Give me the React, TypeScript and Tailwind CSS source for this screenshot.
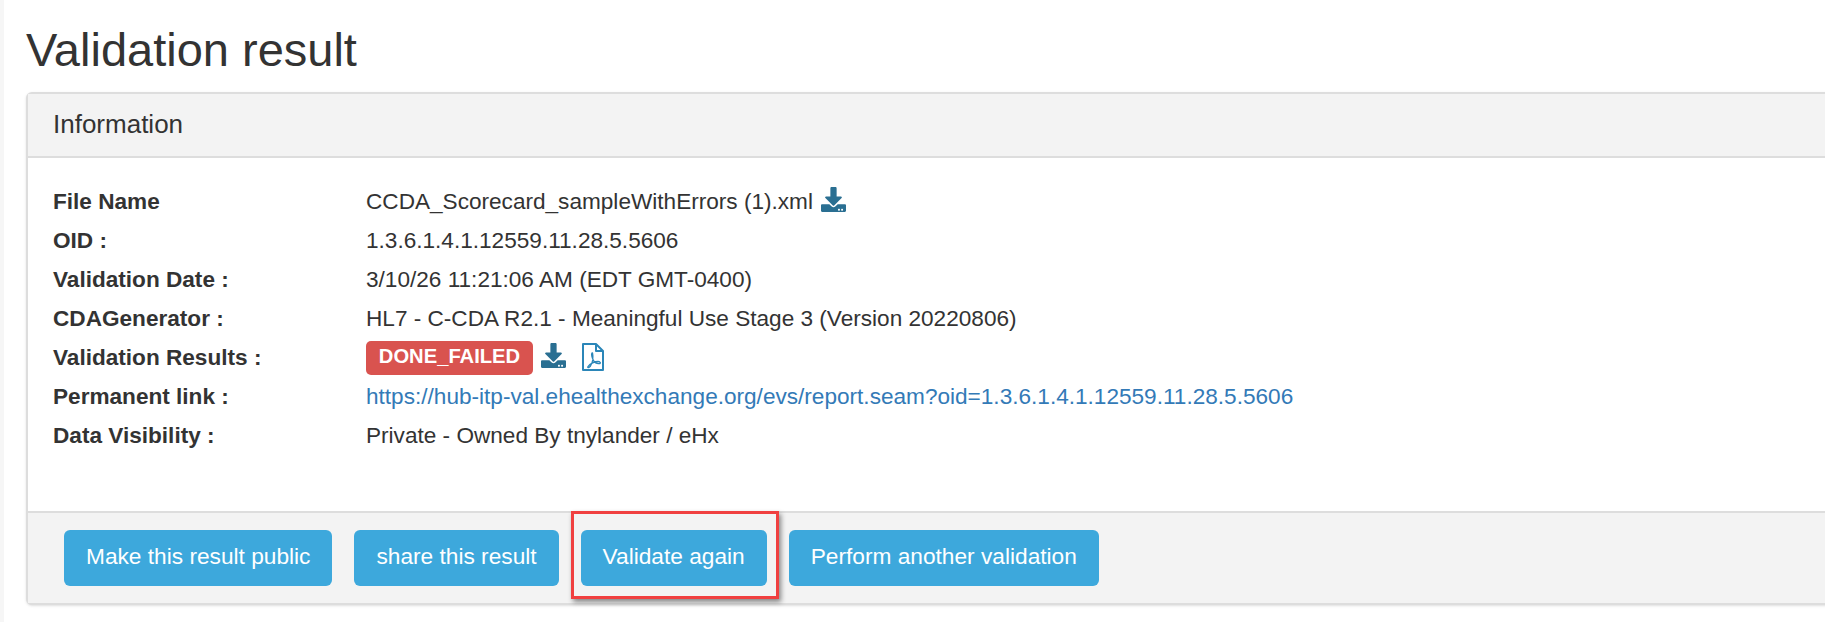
import React from 'react';
import { FaDownload } from 'react-icons/fa';

const PdfIcon: React.FC = () => (
    <svg className="ml-[16px] -mt-[1px]" width="22" height="28" viewBox="0 0 22 28" fill="none" stroke="#2b86b8">
        <path strokeWidth="2" strokeLinejoin="round" d="M1 1h13l7 7v19H1z" />
        <path strokeWidth="2" strokeLinejoin="round" d="M14 1v7h7" />
        <path strokeWidth="1.3" strokeLinejoin="round" d="M10 10c-1 1 0 5 1.5 7.5S16 21 18 20.5c1-.5 0-2-2-2-3 0-8 2-10 5-1 1.5 1 1.5 2.500-.5 1.500-2.500 3-8 2-13z" />
    </svg>
);

const rows: { label: string; value: React.ReactNode }[] = [
    {
        label: 'File Name',
        value: (
            <span className="flex items-center gap-2">
                CCDA_Scorecard_sampleWithErrors (1).xml
                <FaDownload className="text-[25px] text-[#2a6f92] -mt-1" />
            </span>
        ),
    },
    { label: 'OID :', value: '1.3.6.1.4.1.12559.11.28.5.5606' },
    { label: 'Validation Date :', value: '3/10/26 11:21:06 AM (EDT GMT-0400)' },
    { label: 'CDAGenerator :', value: 'HL7 - C-CDA R2.1 - Meaningful Use Stage 3 (Version 20220806)' },
    {
        label: 'Validation Results :',
        value: (
            <span className="flex items-center">
                <span className="bg-[#d9534f] text-white font-bold text-[20.2px] leading-none rounded-[5px] h-[34px] w-[167px] flex items-center justify-center pb-[2px]">
                    DONE_FAILED
                </span>
                <FaDownload className="text-[25px] text-[#2a6f92] ml-2 -mt-1" />
                <PdfIcon />
            </span>
        ),
    },
    {
        label: 'Permanent link :',
        value: <a className="text-[#337ab7]">https://hub-itp-val.ehealthexchange.org/evs/report.seam?oid=1.3.6.1.4.1.12559.11.28.5.5606</a>,
    },
    { label: 'Data Visibility :', value: 'Private - Owned By tnylander / eHx' },
];

const buttons = ['Make this result public', 'share this result', 'Validate again', 'Perform another validation'];

const App: React.FC = () => {
    return (
        <div className="h-[622px] overflow-hidden bg-white font-['Liberation_Sans',Arial,sans-serif] text-[#333] text-[22.6px] border-l-[4px] border-[#f6f6f6]">
            <div className="pl-[22px] -mr-4">
                <h1 className="text-[47px] leading-[56px] pt-[22px] pb-[14px] text-[#333]">Validation result</h1>
                <div className="border-2 border-[#dddddd] rounded-[6px] bg-white shadow-sm">
                    <div className="h-[64px] bg-[#f3f3f3] border-b-2 border-[#dddddd] px-[25px] pb-[2px] flex items-center text-[26px]">
                        Information
                    </div>
                    <div className="h-[353px] pt-[24px] px-[25px]">
                        {rows.map((row) => (
                            <div key={row.label} className="flex items-center h-[39px]">
                                <div className="w-[313px] font-bold shrink-0">{row.label}</div>
                                <div>{row.value}</div>
                            </div>
                        ))}
                    </div>
                    <div className="h-[92px] bg-[#f3f3f3] border-t-2 border-[#dddddd] px-[36px] flex items-center gap-[22px]">
                        {buttons.map((text) => (
                            <div key={text} className="relative">
                                <button className="h-[56px] px-[22px] rounded-[6px] bg-[#3da8dc] text-white text-[22.7px] pb-[4px]">
                                    {text}
                                </button>
                                {text === 'Validate again' && (
                                    <div className="absolute -left-[10px] -right-[12px] -top-[19px] -bottom-[13px] border-[3px] border-[#f04040] shadow-[2px_3px_5px_rgba(0,0,0,0.45)]" />
                                )}
                            </div>
                        ))}
                    </div>
                </div>
            </div>
        </div>
    );
};

export default App;
